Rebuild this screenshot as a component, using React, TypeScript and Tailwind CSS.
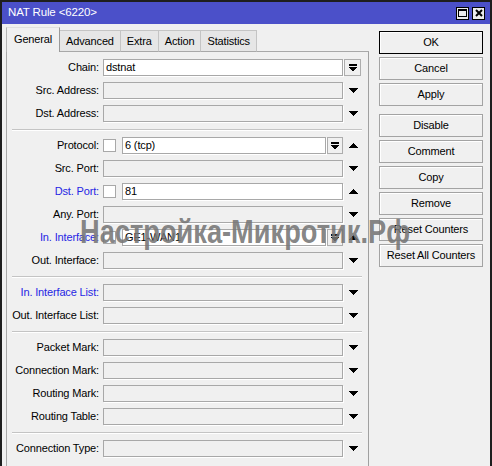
import React from "react";

type Row = {
  label: string;
  blue?: boolean;
  value?: string;
  check?: boolean;
  btn?: boolean;
  arrow?: "up" | "down" | "none";
};

const SECTIONS: Row[][] = [
  [
    { label: "Chain:", value: "dstnat", btn: true, arrow: "none" },
    { label: "Src. Address:" },
    { label: "Dst. Address:" },
  ],
  [
    { label: "Protocol:", check: true, value: "6 (tcp)", btn: true, arrow: "up" },
    { label: "Src. Port:" },
    { label: "Dst. Port:", blue: true, check: true, value: "81", arrow: "up" },
    { label: "Any. Port:" },
    { label: "In. Interface:", blue: true, check: true, value: "GE1-WAN1", btn: true, arrow: "up" },
    { label: "Out. Interface:" },
  ],
  [
    { label: "In. Interface List:", blue: true },
    { label: "Out. Interface List:" },
  ],
  [
    { label: "Packet Mark:" },
    { label: "Connection Mark:" },
    { label: "Routing Mark:" },
    { label: "Routing Table:" },
  ],
  [{ label: "Connection Type:" }],
];

const TABS = ["General", "Advanced", "Extra", "Action", "Statistics"];

const BUTTONS = [
  ["OK", "Cancel", "Apply"],
  ["Disable", "Comment", "Copy", "Remove", "Reset Counters", "Reset All Counters"],
];

function Arrow({ dir }: { dir: "up" | "down" }) {
  return (
    <svg width="9" height="5" viewBox="0 0 9 5" shapeRendering="crispEdges">
      {dir === "down" ? (
        <polygon points="0,0 9,0 4.5,5" fill="#000" />
      ) : (
        <polygon points="0,5 9,5 4.5,0" fill="#000" />
      )}
    </svg>
  );
}

function DropButton({ w }: { w: string }) {
  return (
    <div
      className={`${w} ml-[1px] h-[17px] shrink-0 flex items-center justify-center border border-[#adadad] bg-[#f0f0f0]`}
    >
      <svg width="8" height="8" viewBox="0 0 8 8" shapeRendering="crispEdges">
        <rect x="0" y="0" width="8" height="1.5" fill="#000" />
        <polygon points="0,3 8,3 4,7.5" fill="#000" />
      </svg>
    </div>
  );
}

function FieldRow({ row }: { row: Row }) {
  const arrow = row.arrow ?? "down";
  return (
    <div className="flex h-[17px] items-center">
      <div
        className={`w-[92px] shrink-0 text-right whitespace-nowrap ${
          row.blue ? "text-[#2626e4]" : "text-black"
        }`}
      >
        {row.label}
      </div>
      <div className="ml-[4px] flex w-[240px] shrink-0 items-center">
        {row.check && (
          <div className="mr-[6px] h-[13px] w-[13px] shrink-0 border border-[#a8a8a8] bg-white" />
        )}
        <div
          className={`h-[17px] flex-1 min-w-0 border border-[#a8a8a8] pl-[2px] leading-[15px] whitespace-nowrap shadow-[1px_1px_0_#fff] ${
            row.value ? "bg-white" : "bg-[#f0f0f0]"
          }`}
        >
          {row.value}
        </div>
        {row.btn && arrow !== "none" && <DropButton w="w-[16px]" />}
      </div>
      {arrow === "none" ? (
        <DropButton w="w-[17px]" />
      ) : (
        <div className="flex w-[20px] shrink-0 justify-center">
          <Arrow dir={arrow} />
        </div>
      )}
    </div>
  );
}

export default function App() {
  return (
    <div className="relative flex h-[466px] w-[492px] flex-col overflow-hidden border-2 border-b-0 border-[#1e1e1e] bg-[#f0f0f0] font-['Liberation_Sans',Arial,sans-serif] text-[11px] tracking-[-0.15px] text-black">
      {/* title bar */}
      <div className="flex h-[22px] shrink-0 items-center bg-[#4b50c9] pl-[6px] pr-[5px] text-[11.5px] text-white">
        <span>NAT Rule &lt;6220&gt;</span>
        <div className="ml-auto flex gap-[3px]">
          <div className="flex h-[13px] w-[13px] items-center justify-center border border-black bg-[#ececec]">
            <svg width="9" height="8" viewBox="0 0 9 8" shapeRendering="crispEdges">
              <rect x="0.5" y="0.5" width="8" height="7" fill="none" stroke="#000" />
              <rect x="0" y="0" width="9" height="2" fill="#000" />
            </svg>
          </div>
          <div className="flex h-[13px] w-[13px] items-center justify-center border border-black bg-[#ececec]">
            <svg width="8" height="8" viewBox="0 0 8 8">
              <path d="M1 1 L7 7 M7 1 L1 7" stroke="#000" strokeWidth="2" />
            </svg>
          </div>
        </div>
      </div>

      <div className="flex flex-1">
        {/* left: tabs + panel */}
        <div className="flex flex-col pl-[4px]">
          <div className="flex h-[28px] items-end">
            {TABS.map((t, i) =>
              i === 0 ? (
                <div
                  key={t}
                  className="flex h-[25px] items-center border-l border-t border-r border-l-[#b4b4b4] border-t-[#e0e0e0] border-r-[#9a9a9a] bg-[#f0f0f0] px-[7px] pb-[2px]"
                >
                  {t}
                </div>
              ) : (
                <div
                  key={t}
                  className="flex h-[22px] items-center border-t border-r border-b border-[#c4c4c4] border-b-[#a8a8a8] bg-[#e6e6e6] px-[6px]"
                >
                  {t}
                </div>
              )
            )}
            <div className="h-px flex-1 bg-[#a8a8a8]" />
          </div>
          <div className="flex w-[363px] flex-1 flex-col border-l border-r border-l-[#a8a8a8] border-r-[#a0a0a0] pt-[7px]">
            {SECTIONS.map((sec, si) => (
              <React.Fragment key={si}>
                {si > 0 && (
                  <div className="ml-[5px] mr-[6px] mt-[7px] mb-[6px] border-t border-b border-t-[#c4c4c4] border-b-white" />
                )}
                <div className="flex flex-col gap-[6px]">
                  {sec.map((r) => (
                    <FieldRow key={r.label} row={r} />
                  ))}
                </div>
              </React.Fragment>
            ))}
          </div>
        </div>

        {/* right: buttons */}
        <div className="ml-[10px] flex w-[104px] flex-col pt-[7px]">
          {BUTTONS.map((group, gi) => (
            <div key={gi} className={`flex flex-col gap-[3px] ${gi > 0 ? "mt-[8px]" : ""}`}>
              {group.map((b) => (
                <div
                  key={b}
                  className={`flex h-[23px] items-center justify-center border bg-[#f0f0f0] shadow-[inset_1px_1px_0_#fff] whitespace-nowrap ${
                    b === "OK" ? "border-black" : "border-[#a3a3a3]"
                  }`}
                >
                  {b}
                </div>
              ))}
            </div>
          ))}
        </div>
      </div>

      {/* watermark */}
      <div className="pointer-events-none absolute left-[78px] top-[213px] origin-left scale-x-[0.825] whitespace-nowrap font-['Liberation_Sans',Arial,sans-serif] text-[33px] font-bold leading-none tracking-normal text-[#767676]/90">
        Настройка-Микротик.Рф
      </div>
    </div>
  );
}
